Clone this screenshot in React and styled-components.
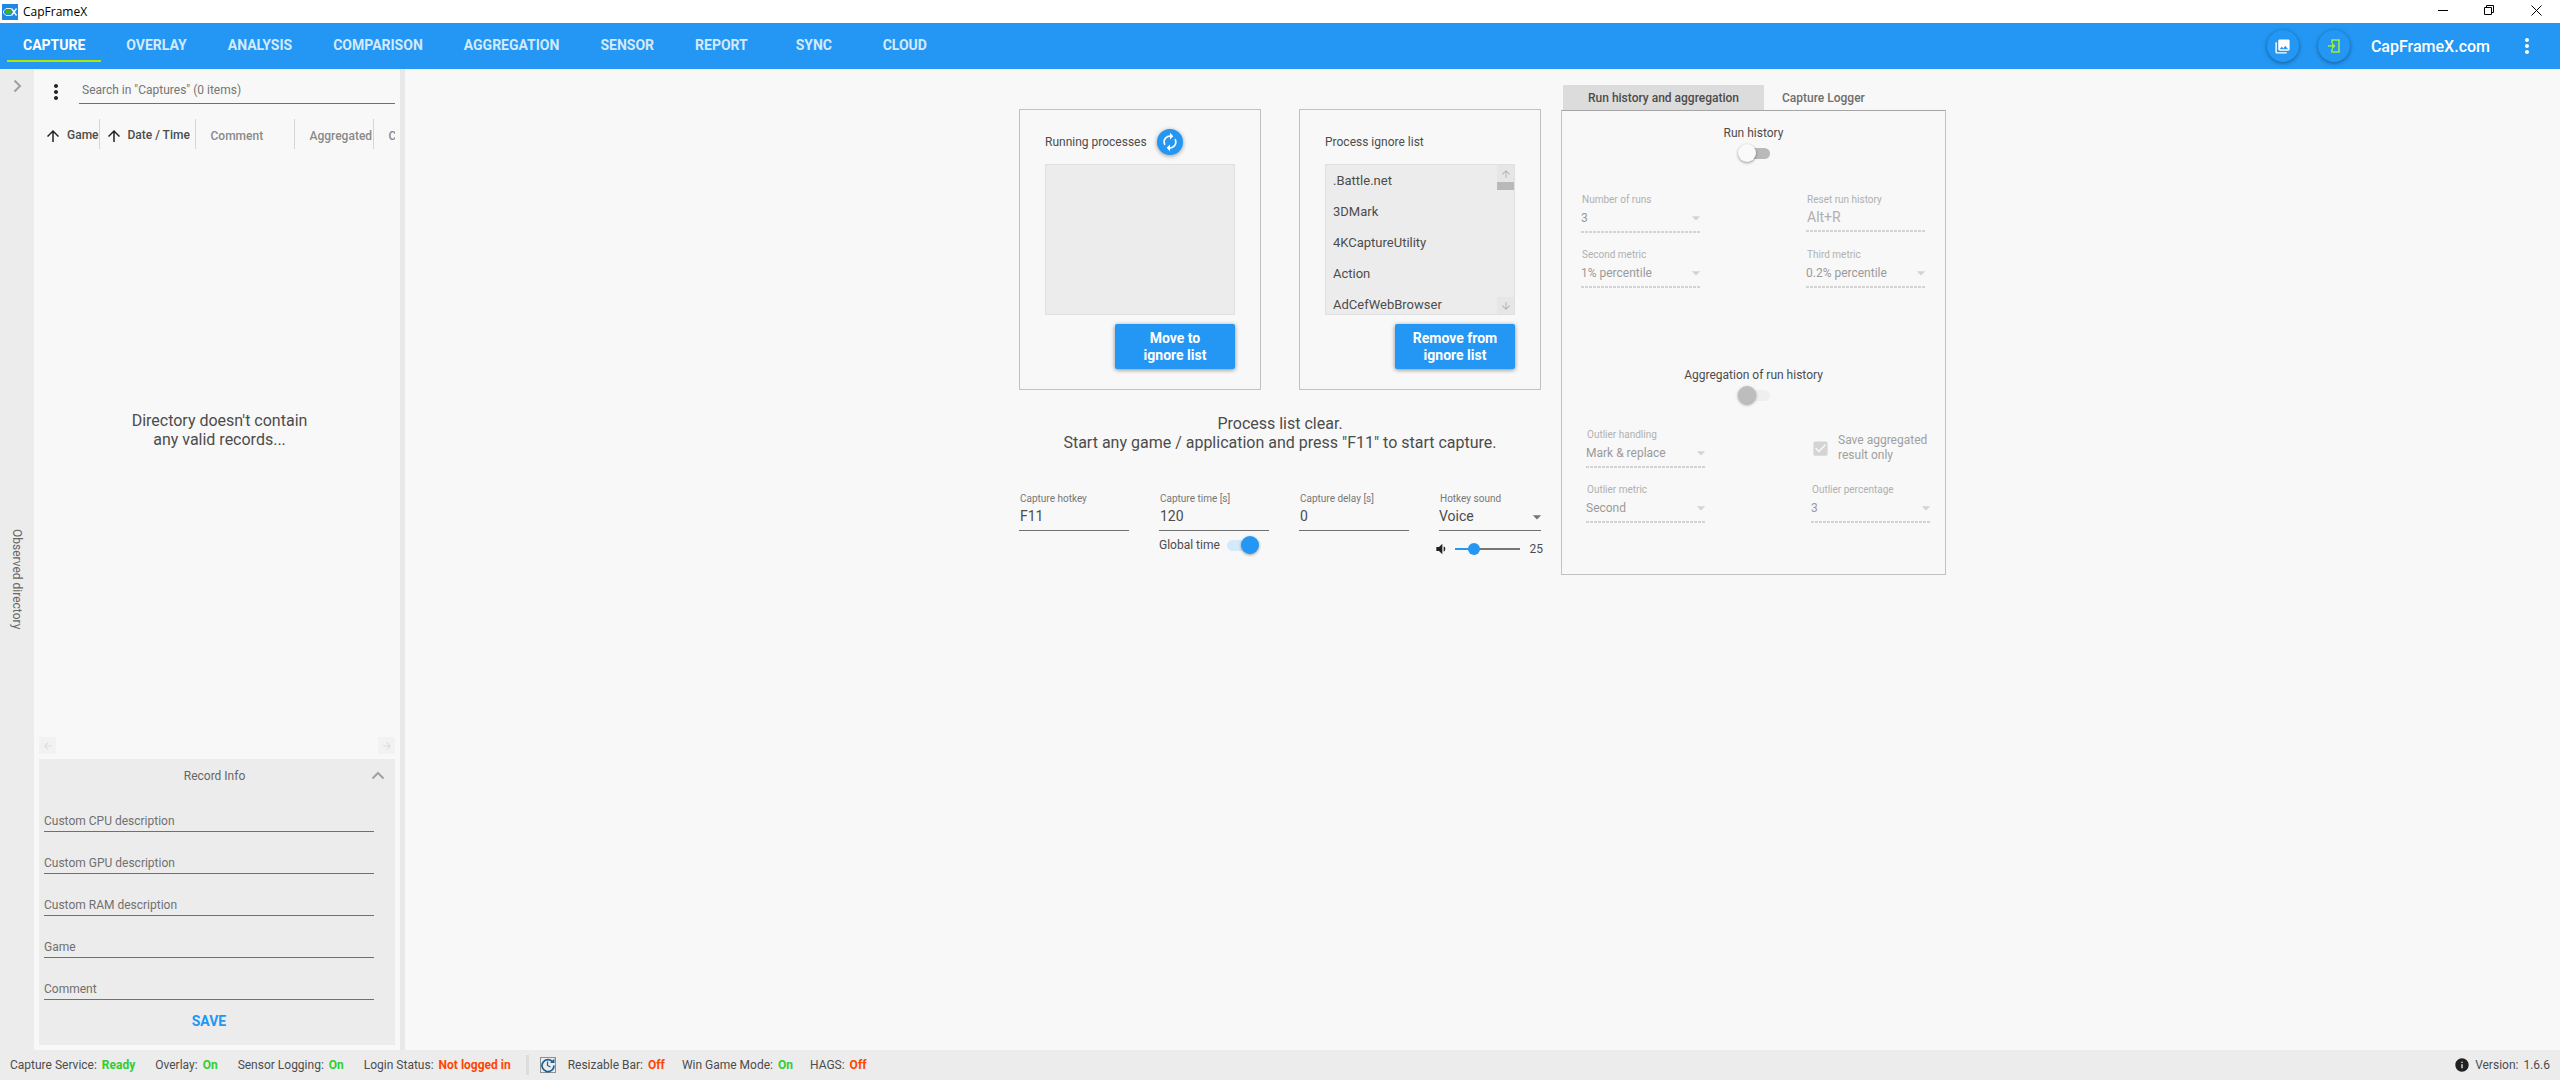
import React, { useState } from "react";
import styled, { createGlobalStyle, css } from "styled-components";
import {
  MdArrowBack,
  MdArrowDownward,
  MdArrowDropDown,
  MdArrowForward,
  MdArrowUpward,
  MdAutorenew,
  MdCheckBox,
  MdInfo,
  MdMoreVert,
  MdPhotoLibrary,
  MdVolumeDown,
} from "react-icons/md";

const navTabs = [
  "CAPTURE",
  "OVERLAY",
  "ANALYSIS",
  "COMPARISON",
  "AGGREGATION",
  "SENSOR",
  "REPORT",
  "SYNC",
  "CLOUD",
];

const recordFields = [
  "Custom CPU description",
  "Custom GPU description",
  "Custom RAM description",
  "Game",
  "Comment",
];

const ignoreList = [
  ".Battle.net",
  "3DMark",
  "4KCaptureUtility",
  "Action",
  "AdCefWebBrowser",
];

const serviceStates = [
  { label: "Capture Service:", value: "Ready", ok: true },
  { label: "Overlay:", value: "On", ok: true },
  { label: "Sensor Logging:", value: "On", ok: true },
  { label: "Login Status:", value: "Not logged in", ok: false },
];

const systemStates = [
  { label: "Resizable Bar:", value: "Off", ok: false },
  { label: "Win Game Mode:", value: "On", ok: true },
  { label: "HAGS:", value: "Off", ok: false },
];

function Logo() {
  return (
    <svg width="16" height="16" viewBox="0 0 16 16" aria-hidden="true">
      <rect width="16" height="16" fill="#1e88e5" />
      <path
        d="M9 4.5H4L1.5 7v2L4 11.5h5"
        fill="none"
        stroke="#e3f2fd"
        strokeWidth="1"
      />
      <rect x="3.5" y="6" width="5.5" height="4" fill="#43b02a" />
      <path d="M9.500 4.500l5 7M14.500 4.500l-5 7" stroke="#fff" strokeWidth="1.3" />
    </svg>
  );
}

function LoginIcon() {
  return (
    <svg width="12" height="14" viewBox="0 0 12 14" aria-hidden="true">
      <path
        d="M4 4V1h7v12H4v-3"
        fill="none"
        stroke="#a0ec3c"
        strokeWidth="1.6"
      />
      <path d="M0 6.200h4V3.500L7.500 7 4 10.500V7.800H0z" fill="#a0ec3c" />
    </svg>
  );
}

function Chevron({ up }) {
  return (
    <svg width="14" height="14" viewBox="0 0 14 14" aria-hidden="true">
      <path
        d={up ? "M1.500 9.500L7 4l5.500 5.500" : "M4.500 1.500L10 7l-5.500 5.500"}
        fill="none"
        stroke="#a0a0a0"
        strokeWidth="2"
      />
    </svg>
  );
}

function RestartClock() {
  return (
    <svg width="16" height="16" viewBox="0 0 16 16" aria-hidden="true">
      <rect
        x="0.5"
        y="0.5"
        width="15"
        height="15"
        fill="none"
        stroke="#333"
        strokeDasharray="1 1"
      />
      <path
        d="M12.800 5A6 6 0 1 0 14 8.500"
        fill="none"
        stroke="#1d6091"
        strokeWidth="1.7"
      />
      <path d="M14.500 1.500V6H10z" fill="#1d6091" />
      <path d="M7.500 4.500v4l3 1.500" fill="none" stroke="#1d6091" strokeWidth="1.2" />
    </svg>
  );
}

function SelectField({ id, label, value, disabled, large }) {
  return (
    <Field>
      <FieldLabel htmlFor={id} $disabled={disabled}>
        {label}
      </FieldLabel>
      <SelectBox>
        <Select id={id} disabled={disabled} $large={large}>
          <option>{value}</option>
        </Select>
        <MdArrowDropDown />
      </SelectBox>
    </Field>
  );
}

function TextField({ id, label, value, disabled }) {
  return (
    <Field>
      <FieldLabel htmlFor={id} $disabled={disabled}>
        {label}
      </FieldLabel>
      <TextInput id={id} defaultValue={value} disabled={disabled} />
    </Field>
  );
}

function StatusItem({ label, value, ok }) {
  return (
    <Status>
      {label}
      <StatusValue $ok={ok}>{value}</StatusValue>
    </Status>
  );
}

function Sidebar() {
  return (
    <Side>
      <SearchRow>
        <IconButton aria-label="Record list menu">
          <MdMoreVert size={24} />
        </IconButton>
        <SearchInput
          aria-label="Search captures"
          placeholder={'Search in "Captures" (0 items)'}
        />
      </SearchRow>
      <TableWrap>
        <RecordTable>
          <colgroup>
            <col width="60" />
            <col width="96" />
            <col width="99" />
            <col width="79" />
            <col width="100" />
          </colgroup>
          <thead>
            <tr>
              <Th $sorted>
                <MdArrowUpward size={18} />
                Game
              </Th>
              <Th $sorted>
                <MdArrowUpward size={18} />
                Date / Time
              </Th>
              <Th>Comment</Th>
              <Th>Aggregated</Th>
              <Th>CPU</Th>
            </tr>
          </thead>
        </RecordTable>
      </TableWrap>
      <EmptyMessage>
        <p>
          Directory doesn't contain
          <br />
          any valid records...
        </p>
      </EmptyMessage>
      <ScrollRow>
        <ScrollButton aria-label="Scroll left">
          <MdArrowBack size={12} />
        </ScrollButton>
        <ScrollButton aria-label="Scroll right">
          <MdArrowForward size={12} />
        </ScrollButton>
      </ScrollRow>
      <RecordInfo>
        <RecordHeader>
          <h2>Record Info</h2>
          <IconButton aria-label="Collapse record info">
            <Chevron up />
          </IconButton>
        </RecordHeader>
        <RecordForm>
          {recordFields.map((name) => (
            <RecordInput key={name} aria-label={name} placeholder={name} />
          ))}
          <SaveButton type="button">SAVE</SaveButton>
        </RecordForm>
      </RecordInfo>
    </Side>
  );
}

function CaptureControls() {
  const [volume, setVolume] = useState(25);

  return (
    <Controls>
      <Cards>
        <Card>
          <CardHeader>
            <h2>Running processes</h2>
            <RoundButton $size={26} aria-label="Refresh processes">
              <MdAutorenew size={20} />
            </RoundButton>
          </CardHeader>
          <ProcessList />
          <PrimaryButton>
            Move to
            <br />
            ignore list
          </PrimaryButton>
        </Card>
        <Card>
          <CardHeader>
            <h2>Process ignore list</h2>
          </CardHeader>
          <ProcessList>
            <Processes>
              {ignoreList.map((name) => (
                <li key={name}>{name}</li>
              ))}
            </Processes>
            <ScrollTrack>
              <ListScrollButton aria-label="Scroll up">
                <MdArrowUpward size={12} />
              </ListScrollButton>
              <ScrollThumb />
              <ListScrollButton aria-label="Scroll down">
                <MdArrowDownward size={12} />
              </ListScrollButton>
            </ScrollTrack>
          </ProcessList>
          <PrimaryButton>
            Remove from
            <br />
            ignore list
          </PrimaryButton>
        </Card>
      </Cards>
      <CaptureMessage>
        Process list clear.
        <br />
        Start any game / application and press "F11" to start capture.
      </CaptureMessage>
      <CaptureFields>
        <TextField id="hotkey" label="Capture hotkey" value="F11" />
        <div>
          <TextField id="time" label="Capture time [s]" value="120" />
          <ToggleLabel>
            Global time
            <Toggle type="checkbox" defaultChecked />
          </ToggleLabel>
        </div>
        <TextField id="delay" label="Capture delay [s]" value="0" />
        <div>
          <SelectField id="sound" label="Hotkey sound" value="Voice" large />
          <VolumeRow>
            <MdVolumeDown size={16} />
            <VolumeSlider
              type="range"
              aria-label="Hotkey volume"
              value={volume}
              onChange={(e) => setVolume(Number(e.target.value))}
              style={{ "--fill": `${volume}%` }}
            />
            <span>{volume}</span>
          </VolumeRow>
        </div>
      </CaptureFields>
    </Controls>
  );
}

function HistoryPanel() {
  return (
    <Panel>
      <PanelTabs>
        <PanelTab $active>Run history and aggregation</PanelTab>
        <PanelTab>Capture Logger</PanelTab>
      </PanelTabs>
      <PanelBody>
        <SwitchLabel>
          Run history
          <Toggle type="checkbox" />
        </SwitchLabel>
        <FieldGrid>
          <SelectField id="runs" label="Number of runs" value="3" disabled />
          <TextField id="reset" label="Reset run history" value="Alt+R" disabled />
          <SelectField id="second" label="Second metric" value="1% percentile" disabled />
          <SelectField id="third" label="Third metric" value="0.2% percentile" disabled />
        </FieldGrid>
        <SwitchLabel>
          Aggregation of run history
          <Toggle type="checkbox" disabled />
        </SwitchLabel>
        <FieldGrid $inset>
          <SelectField id="handling" label="Outlier handling" value="Mark & replace" disabled />
          <CheckLabel>
            <CheckInput type="checkbox" defaultChecked disabled />
            <MdCheckBox size={19} />
            <span>
              Save aggregated
              <br />
              result only
            </span>
          </CheckLabel>
          <SelectField id="outlier" label="Outlier metric" value="Second" disabled />
          <SelectField id="percentage" label="Outlier percentage" value="3" disabled />
        </FieldGrid>
      </PanelBody>
    </Panel>
  );
}

export default function App() {
  const [activeTab, setActiveTab] = useState("CAPTURE");

  return (
    <>
      <GlobalStyle />
      <Window>
        <TitleBar>
          <Logo />
          <h1>CapFrameX</h1>
          <WindowButton aria-label="Minimize">
            <svg width="11" height="11" viewBox="0 0 11 11">
              <path d="M0 5.500h10" stroke="#000" />
            </svg>
          </WindowButton>
          <WindowButton aria-label="Restore">
            <svg width="11" height="11" viewBox="0 0 11 11">
              <path
                d="M0.500 2.500h7v7h-7zM2.500 2.500v-2h7v7h-2"
                fill="none"
                stroke="#000"
              />
            </svg>
          </WindowButton>
          <WindowButton aria-label="Close">
            <svg width="11" height="11" viewBox="0 0 11 11">
              <path d="M0.500 0.500l10 10M10.500 0.500l-10 10" stroke="#000" />
            </svg>
          </WindowButton>
        </TitleBar>
        <NavBar>
          <NavTabs>
            {navTabs.map((tab) => (
              <NavTab
                key={tab}
                $active={tab === activeTab}
                onClick={() => setActiveTab(tab)}
              >
                {tab}
              </NavTab>
            ))}
          </NavTabs>
          <NavActions>
            <RoundButton $size={32} aria-label="Screenshots">
              <MdPhotoLibrary size={17} />
            </RoundButton>
            <RoundButton $size={32} aria-label="Login">
              <LoginIcon />
            </RoundButton>
            <SiteLink href="#">CapFrameX.com</SiteLink>
            <IconButton $light aria-label="More options">
              <MdMoreVert size={24} />
            </IconButton>
          </NavActions>
        </NavBar>
        <Content>
          <Rail>
            <IconButton aria-label="Show observed directory">
              <Chevron />
            </IconButton>
            <RailText>Observed directory</RailText>
          </Rail>
          <Sidebar />
          <Splitter />
          <Main>
            <CaptureControls />
            <HistoryPanel />
          </Main>
        </Content>
        <StatusBar>
          <StatusGroup $gap={20}>
            {serviceStates.map((item) => (
              <StatusItem key={item.label} {...item} />
            ))}
          </StatusGroup>
          <StatusDivider />
          <RestartClock />
          <StatusGroup $gap={17}>
            {systemStates.map((item) => (
              <StatusItem key={item.label} {...item} />
            ))}
          </StatusGroup>
          <Version>
            <MdInfo size={16} />
            Version: <span>1.6.6</span>
          </Version>
        </StatusBar>
      </Window>
    </>
  );
}

const GlobalStyle = createGlobalStyle`
  * {
    box-sizing: border-box;
  }
  body {
    margin: 0;
    background: #f8f8f8;
    color: #4c4c4c;
    font-family: Roboto, "Liberation Sans", sans-serif;
    font-size: 12px;
  }
  button, input, select {
    margin: 0;
    padding: 0;
    border: none;
    border-radius: 0;
    outline: none;
    background: none;
    color: inherit;
    font: inherit;
  }
  h1, h2, p, ul {
    margin: 0;
    padding: 0;
    font-size: inherit;
    font-weight: 400;
  }
  svg {
    flex-shrink: 0;
  }
`;

const Window = styled.div`
  display: flex;
  flex-direction: column;
  min-height: 100vh;
`;

const TitleBar = styled.header`
  display: flex;
  align-items: center;
  height: 23px;
  padding-left: 2px;
  background: #fff;
  color: #000;
  font-family: "Open Sans", "Noto Sans", sans-serif;
  h1 {
    flex: 1;
    padding-left: 5px;
  }
`;

const WindowButton = styled.button`
  display: grid;
  place-items: center;
  align-self: flex-start;
  width: 46px;
  height: 20px;
  &:last-child {
    width: 48px;
  }
`;

const NavBar = styled.nav`
  display: flex;
  justify-content: space-between;
  height: 46px;
  background: #2397f3;
`;

const NavTabs = styled.div`
  display: flex;
  align-items: flex-start;
  gap: 9px;
  padding: 6px 7px 0;
`;

const NavTab = styled.button`
  height: 33px;
  min-width: 82px;
  padding: 0 16px;
  border-bottom: 2px solid ${({ $active }) => ($active ? "#aeea00" : "transparent")};
  color: ${({ $active }) => ($active ? "#fff" : "#d3eafd")};
  font-size: 14px;
  font-weight: 700;
`;

const NavActions = styled.div`
  display: flex;
  align-items: center;
  gap: 19px;
  padding-right: 21px;
`;

const RoundButton = styled.button`
  display: grid;
  place-items: center;
  width: ${({ $size }) => $size}px;
  height: ${({ $size }) => $size}px;
  border-radius: 50%;
  background: #2397f3;
  color: #fff;
  box-shadow: 0 1px 4px rgba(0, 0, 0, 0.4);
`;

const SiteLink = styled.a`
  padding: 0 6px 0 2px;
  color: #fff;
  font-size: 16px;
  font-weight: 500;
  text-decoration: none;
`;

const IconButton = styled.button`
  display: grid;
  place-items: center;
  min-width: 24px;
  height: 34px;
  color: ${({ $light }) => ($light ? "#fff" : "#212121")};
`;

const Content = styled.div`
  display: flex;
  flex: 1;
`;

const Rail = styled.aside`
  display: flex;
  flex-direction: column;
  align-items: center;
  width: 34px;
  background: #ececec;
`;

const RailText = styled.span`
  display: flex;
  flex: 1;
  align-items: center;
  justify-content: center;
  padding-top: 6px;
  color: #666;
  writing-mode: vertical-rl;
`;

const Side = styled.section`
  display: flex;
  flex-direction: column;
  width: 366px;
  padding: 0 5px 5px;
`;

const SearchRow = styled.div`
  display: flex;
  align-items: center;
  height: 50px;
  padding: 0 0 4px 5px;
`;

const SearchInput = styled.input`
  flex: 1;
  height: 24px;
  margin-left: 11px;
  padding: 0 3px 4px;
  border-bottom: 1px solid #707070;
  &::placeholder {
    color: #757575;
    opacity: 1;
  }
`;

const TableWrap = styled.div`
  overflow: hidden;
`;

const RecordTable = styled.table`
  width: 434px;
  table-layout: fixed;
  border-collapse: collapse;
`;

const Th = styled.th`
  height: 30px;
  padding: 4px 0 0 ${({ $sorted }) => ($sorted ? 5 : 15)}px;
  border-right: 1px solid #d6d6d6;
  color: ${({ $sorted }) => ($sorted ? "#4c4c4c" : "#8a8a8a")};
  font-weight: 500;
  text-align: left;
  white-space: nowrap;
  svg {
    margin-right: 5px;
    color: #212121;
    vertical-align: middle;
  }
`;

const EmptyMessage = styled.div`
  display: grid;
  flex: 1;
  place-items: center;
  padding: 0 0 27px 5px;
  font-size: 16px;
  line-height: 19px;
  text-align: center;
`;

const ScrollRow = styled.div`
  display: flex;
  justify-content: space-between;
  margin-bottom: 5px;
`;

const ScrollButton = styled.button`
  display: grid;
  place-items: center;
  width: 17px;
  height: 17px;
  background: #f2f2f2;
  color: #dcdcdc;
`;

const RecordInfo = styled.section`
  padding-bottom: 3px;
  background: #ececec;
`;

const RecordHeader = styled.div`
  display: flex;
  align-items: center;
  height: 31px;
  padding: 3px 5px 0 24px;
  color: #666;
  h2 {
    flex: 1;
    text-align: center;
  }
`;

const RecordForm = styled.form`
  display: flex;
  flex-direction: column;
  padding: 0 21px 0 5px;
`;

const RecordInput = styled.input`
  height: 42px;
  padding-top: 20px;
  border-bottom: 1px solid #707070;
  &::placeholder {
    color: #707070;
    opacity: 1;
  }
`;

const SaveButton = styled.button`
  height: 42px;
  color: #2397f3;
  font-size: 14px;
  font-weight: 700;
`;

const Splitter = styled.div`
  width: 5px;
  background: #e8e8ea;
`;

const Main = styled.main`
  display: flex;
  flex: 1;
  align-items: flex-start;
  justify-content: center;
  gap: 20px;
  padding-top: 16px;
`;

const Controls = styled.section`
  width: 522px;
  padding-top: 24px;
`;

const Cards = styled.div`
  display: grid;
  grid-template-columns: 1fr 1fr;
  gap: 38px;
`;

const Card = styled.div`
  display: flex;
  flex-direction: column;
  padding: 18px 25px 20px;
  border: 1px solid #c2c2c2;
`;

const CardHeader = styled.div`
  display: flex;
  align-items: center;
  gap: 10px;
  height: 28px;
  margin-bottom: 8px;
`;

const ProcessList = styled.div`
  display: flex;
  height: 151px;
  overflow: hidden;
  border: 1px solid #e0e0e0;
  background: #ececec;
`;

const Processes = styled.ul`
  flex: 1;
  padding-left: 7px;
  font-size: 13px;
  list-style: none;
  li {
    line-height: 31px;
  }
`;

const ScrollTrack = styled.div`
  display: flex;
  flex-direction: column;
  width: 17px;
`;

const ListScrollButton = styled(ScrollButton)`
  background: #e6e6e6;
  color: #b5b5b5;
  &:last-child {
    margin-top: auto;
  }
`;

const ScrollThumb = styled.div`
  height: 8px;
  background: #b9b9b9;
`;

const PrimaryButton = styled.button`
  align-self: flex-end;
  width: 120px;
  height: 45px;
  margin-top: 9px;
  border-radius: 2px;
  background: #2397f3;
  box-shadow: 0 1px 4px rgba(0, 0, 0, 0.45);
  color: #fff;
  font-size: 14px;
  font-weight: 700;
  line-height: 17px;
`;

const CaptureMessage = styled.p`
  margin: 24px 0 40px;
  font-size: 16px;
  line-height: 19px;
  text-align: center;
`;

const CaptureFields = styled.div`
  display: grid;
  grid-template-columns: repeat(3, 110px) 1fr;
  align-items: start;
  gap: 30px;
`;

const Field = styled.div`
  display: flex;
  flex-direction: column;
`;

const FieldLabel = styled.label`
  padding-left: 1px;
  color: ${({ $disabled }) => ($disabled ? "#b0b0b0" : "#777")};
  font-size: 10px;
  line-height: 14px;
`;

const dashedLine = css`
  border-bottom-color: transparent;
  background: repeating-linear-gradient(
      90deg,
      #d4d4d4 0 3px,
      transparent 3px 4px
    )
    bottom / 100% 2px no-repeat border-box;
`;

const TextInput = styled.input`
  width: 100%;
  height: 25px;
  padding: 0 1px 4px;
  border-bottom: 1px solid #707070;
  font-size: 14px;
  &:disabled {
    ${dashedLine}
    color: #b0b0b0;
  }
`;

const SelectBox = styled.div`
  position: relative;
  svg {
    position: absolute;
    top: 1px;
    right: -6px;
    width: 20px;
    height: 20px;
    color: #757575;
    pointer-events: none;
  }
  &:has(select:disabled) svg {
    color: #d4d4d4;
  }
`;

const Select = styled.select`
  display: block;
  width: 100%;
  height: ${({ $large }) => ($large ? 25 : 26)}px;
  padding-bottom: 4px;
  border-bottom: 1px solid #707070;
  appearance: none;
  font-size: ${({ $large }) => ($large ? 14 : 12)}px;
  &:disabled {
    ${dashedLine}
    color: #9a9a9a;
    opacity: 1;
  }
`;

const ToggleLabel = styled.label`
  display: flex;
  align-items: center;
  gap: 7px;
  height: 28px;
`;

const Toggle = styled.input`
  display: flex;
  align-items: center;
  width: 32px;
  height: 18px;
  appearance: none;
  &::before {
    content: "";
    z-index: 1;
    width: 18px;
    height: 18px;
    border-radius: 50%;
    background: #fafafa;
    box-shadow: 0 1px 3px rgba(0, 0, 0, 0.4);
  }
  &::after {
    content: "";
    width: 20px;
    height: 11px;
    margin-left: -6px;
    border-radius: 0 6px 6px 0;
    background: #b9b9b9;
  }
  &:checked {
    flex-direction: row-reverse;
  }
  &:checked::before {
    background: #2397f3;
  }
  &:checked::after {
    margin: 0 -6px 0 0;
    border-radius: 6px 0 0 6px;
    background: #d3eafb;
  }
  &:disabled::before {
    background: #bdbdbd;
  }
  &:disabled::after {
    background: #efefef;
  }
`;

const VolumeRow = styled.div`
  display: flex;
  align-items: center;
  gap: 6px;
  height: 36px;
  margin: 0 -2px 0 -6px;
  svg {
    color: #212121;
  }
  span {
    margin-left: auto;
  }
`;

const VolumeSlider = styled.input`
  width: 65px;
  height: 12px;
  appearance: none;
  background: linear-gradient(90deg, #2397f3 var(--fill), #757575 var(--fill))
    center / 100% 2px no-repeat;
  &::-webkit-slider-thumb {
    width: 12px;
    height: 12px;
    border-radius: 50%;
    background: #2397f3;
    appearance: none;
  }
`;

const Panel = styled.section`
  width: 385px;
`;

const PanelTabs = styled.div`
  display: flex;
  padding-left: 2px;
`;

const PanelTab = styled.button`
  height: 25px;
  padding: 0 ${({ $active }) => ($active ? 25 : 18)}px;
  background: ${({ $active }) => ($active ? "#dcdcdc" : "none")};
  color: ${({ $active }) => ($active ? "#4c4c4c" : "#6e6e6e")};
  font-weight: 500;
`;

const PanelBody = styled.div`
  padding: 13px 0 51px;
  border: 1px solid #c2c2c2;
  border-top-color: #a5a5a5;
`;

const SwitchLabel = styled.label`
  display: flex;
  flex-direction: column;
  align-items: center;
  gap: 2px;
  line-height: 18px;
`;

const FieldGrid = styled.div`
  display: grid;
  grid-template-columns: 119px 119px;
  align-items: start;
  justify-content: space-between;
  row-gap: 15px;
  padding: ${({ $inset }) => ($inset ? "24px 15px 0 24px" : "31px 20px 78px 19px")};
`;

const CheckLabel = styled.label`
  display: flex;
  position: relative;
  align-items: center;
  gap: 8px;
  padding-top: 5px;
  color: #a0a0a0;
  line-height: 15px;
  white-space: nowrap;
  svg {
    color: #d4d4d4;
  }
`;

const CheckInput = styled.input`
  position: absolute;
  width: 19px;
  height: 19px;
  opacity: 0;
`;

const StatusBar = styled.footer`
  display: flex;
  align-items: center;
  height: 30px;
  padding: 0 10px;
  background: #ececec;
`;

const StatusGroup = styled.div`
  display: flex;
  gap: ${({ $gap }) => $gap}px;
`;

const Status = styled.span`
  white-space: nowrap;
`;

const StatusValue = styled.strong`
  margin-left: 5px;
  color: ${({ $ok }) => ($ok ? "#32cd32" : "#ff4500")};
  font-weight: 700;
`;

const StatusDivider = styled.div`
  width: 3px;
  height: 20px;
  margin: 0 11px 0 15px;
  background: #dcdcdc;
  & + svg {
    margin-right: 12px;
  }
`;

const Version = styled.span`
  display: flex;
  align-items: center;
  gap: 5px;
  margin-left: auto;
  svg {
    color: #212121;
  }
`;
